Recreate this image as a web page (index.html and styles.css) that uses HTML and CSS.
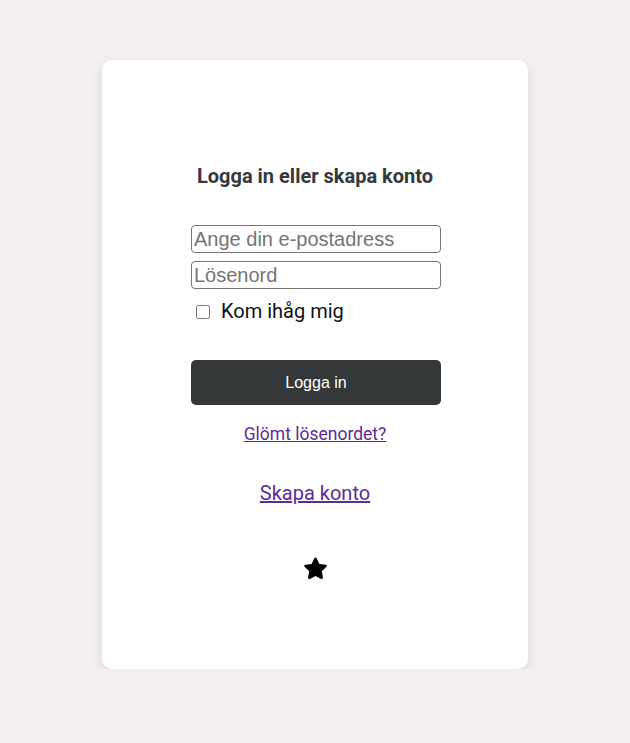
FILE: index.html
```html
<!DOCTYPE html>
<html lang="sv">
<head>
<meta charset="utf-8">
<title>Logga in</title>
<link rel="stylesheet" href="styles.css">
</head>
<body>
<main class="card">
  <h1 class="title">Logga in eller skapa konto</h1>
  <form class="form">
    <input class="field" type="email" placeholder="Ange din e-postadress">
    <input class="field field-pw" type="password" placeholder="Lösenord">
    <label class="remember"><input class="check" type="checkbox"><span>Kom ihåg mig</span></label>
    <button class="btn" type="button">Logga in</button>
  </form>
  <a class="link forgot" href="#">Glömt lösenordet?</a>
  <a class="link create" href="#">Skapa konto</a>
  <svg class="star" viewBox="0 0 24 24" width="27" height="27" aria-hidden="true">
    <path d="M12 2.2c.4 0 .8.2 1 .6l2.5 5.1 5.6.8c.9.1 1.2 1.2.6 1.8l-4.1 4 1 5.6c.2.9-.8 1.6-1.6 1.2L12 18.6l-5 2.7c-.8.4-1.8-.3-1.6-1.2l1-5.6-4.1-4c-.6-.6-.3-1.7.6-1.8l5.6-.8L11 2.8c.2-.4.6-.6 1-.6z" fill="#000"/>
  </svg>
</main>
</body>
</html>
```

FILE: styles.css
```css
html, body {
  margin: 0;
  padding: 0;
}
body {
  background: #f5f0f0;
  font-family: Roboto, "Liberation Sans", Arial, sans-serif;
  display: flex;
  justify-content: center;
  padding-top: 60px;
}
.card {
  box-sizing: border-box;
  width: 426px;
  height: 609px;
  background: #fff;
  border-radius: 10px;
  box-shadow: 0 4px 12px rgba(120, 100, 100, 0.18);
  display: flex;
  flex-direction: column;
  align-items: center;
  padding-top: 105px;
}
.title {
  margin: 0;
  font-size: 20px;
  font-weight: 700;
  line-height: 23px;
  color: #343a3b;
}
.form {
  margin-top: 37px;
  margin-left: 2px;
  width: 250px;
  display: flex;
  flex-direction: column;
}
.field {
  box-sizing: border-box;
  width: 250px;
  height: 28px;
  margin: 0;
  padding: 1px 2px;
  font-family: "Liberation Sans", Arial, sans-serif;
  font-size: 20px;
  border: 1px solid #767676;
  border-radius: 4px;
  color: #222;
  background: #fff;
}
.field::placeholder {
  color: #757575;
}
.field-pw {
  margin-top: 8px;
}
.remember {
  margin-top: 11px;
  display: flex;
  align-items: center;
  font-size: 20px;
  line-height: 23px;
  color: #111;
}
.check {
  width: 14px;
  height: 14px;
  margin: 0 11px 0 5px;
}
.btn {
  margin-top: 37px;
  height: 45px;
  width: 250px;
  border: none;
  border-radius: 5px;
  background: #353839;
  color: #fff;
  font-family: "Liberation Sans", Arial, sans-serif;
  font-size: 16px;
}
.link {
  color: #5f2b96;
  text-decoration: underline;
}
.forgot {
  margin-top: 19px;
  font-size: 17.5px;
  line-height: 20px;
}
.create {
  margin-top: 38px;
  font-size: 20px;
  line-height: 23px;
}
.star {
  margin-top: 50px;
  display: block;
}
```
